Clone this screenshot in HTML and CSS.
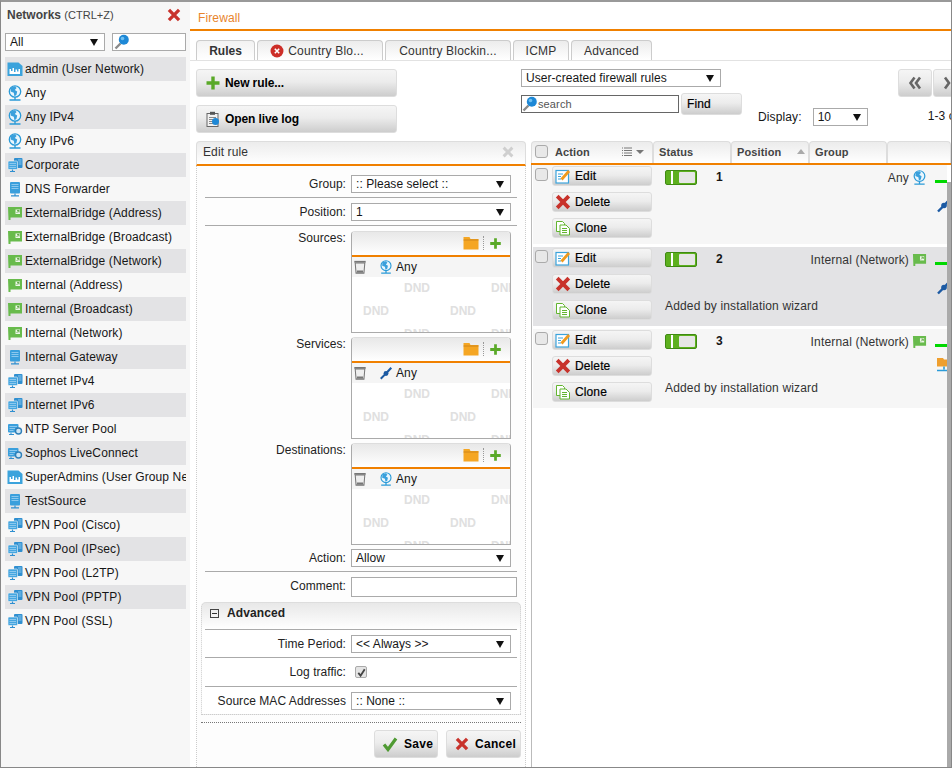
FILE: index.html
```html
<!DOCTYPE html>
<html>

<head>
    <meta charset="utf-8" />
    <title>Firewall</title>
    <link rel="stylesheet" href="styles.css">
</head>

<body>
    <!-- icon sheet -->
    <svg class="defs">
        <symbol id="i-globe" viewBox="0 0 16 16">
            <circle cx="8" cy="6.500" r="5.700" fill="#eaf6fd" stroke="#2b9bd8" stroke-width="1.300"/>
            <path d="M4 2.500l4-1.200 1.600 1.700-1.800 2 2.400 1.600-.8 3.400-2 1.200-.6-3.400L3.600 6.500z" fill="#3aa0dc"/>
            <path d="M8 12v2.500M2.500 15h11" stroke="#2b9bd8" stroke-width="1.400" fill="none"/>
        </symbol>
        <symbol id="i-user" viewBox="0 0 16 16">
            <path d="M.5 1.500h11l4 3.500v10H.5z" fill="#3ba3dc"/>
            <path d="M2.500 13V8h1.500v2h1.500V7h1.500v4h1.500V8.500h1.500v2h1.500V8h1.500v5z" fill="#fff"/>
        </symbol>
        <symbol id="i-multi" viewBox="0 0 16 16">
            <rect x="7" y="1" width="8.500" height="10" rx="1" fill="#2f8fd0"/>
            <rect x="1" y="4" width="9.500" height="8.500" rx="1" fill="#45a6e0" stroke="#f7f7f7" stroke-width=".6"/>
            <path d="M2.500 6.500h6.500M2.500 8.500h6.500M2.500 10.500h6.500M11 3h3.500M11.500 5h3M11.500 7h3" stroke="#8cc8ee" stroke-width="1"/>
            <path d="M5.500 12.500v1.500M3 14.500h5" stroke="#2f8fd0" stroke-width="1.200"/>
        </symbol>
        <symbol id="i-host" viewBox="0 0 16 16">
            <rect x="3" y="1" width="10" height="11.500" rx="1" fill="#3a9fdc"/>
            <path d="M4.500 3.500h7M4.500 5.500h7M4.500 7.500h7" stroke="#8cc8ee" stroke-width="1"/>
            <path d="M8 12.500v2M4 14.800h8" stroke="#2f8fd0" stroke-width="1.200"/>
        </symbol>
        <symbol id="i-pool" viewBox="0 0 16 16">
            <rect x="1" y="3" width="10.500" height="8.500" rx="1" fill="#3a9fdc"/>
            <path d="M2.500 5.500h7.500M2.500 7.500h5.500M2.500 9.500h4" stroke="#8cc8ee" stroke-width="1"/>
            <circle cx="11.500" cy="10" r="3" fill="#cfe6f5" stroke="#2f7fb8" stroke-width="1.400"/>
            <path d="M4 11.500v1.500M2 13.500h5" stroke="#2f8fd0" stroke-width="1"/>
        </symbol>
        <symbol id="i-iface" viewBox="0 0 16 16">
            <path d="M1 2h14v10.500H3.500V15H1.500z" fill="#68bb4c"/>
            <rect x="8.500" y="4.500" width="4.500" height="4.500" fill="#eef8e8"/>
            <path d="M9.500 8l2.500-2.500M10 5.500h2v2" stroke="#4f9a32" stroke-width=".8" fill="none"/>
        </symbol>
        <symbol id="i-find" viewBox="0 0 16 16">
            <path d="M1.500 14.500l5-5" stroke="#8a8a8a" stroke-width="2.400"/>
            <circle cx="9.800" cy="5.800" r="5" fill="#1e88d6"/>
            <circle cx="8.500" cy="4.500" r="1.800" fill="#6fc0f2"/>
        </symbol>
        <symbol id="i-plus" viewBox="0 0 16 16">
            <path d="M8 1.500v13M1.500 8h13" stroke="#5aa928" stroke-width="3.400"/>
        </symbol>
        <symbol id="i-x" viewBox="0 0 16 16">
            <path d="M2.200 2.200l11.600 11.600M13.800 2.200L2.200 13.800" stroke="#c8322b" stroke-width="3.800"/>
        </symbol>
        <symbol id="i-xgrey" viewBox="0 0 16 16">
            <path d="M3 3l10 10M13 3L3 13" stroke="#cfcfcf" stroke-width="3.400"/>
        </symbol>
        <symbol id="i-check" viewBox="0 0 16 16">
            <path d="M2 8.500l4 5L14 2.500" stroke="#4f9a32" stroke-width="3.200" fill="none"/>
        </symbol>
        <symbol id="i-log" viewBox="0 0 16 16">
            <rect x="2" y="2.500" width="11" height="13" fill="#f2f2f2" stroke="#666" stroke-width="1"/>
            <rect x="5" y=".8" width="5" height="3" fill="#555"/>
            <path d="M4 6.500h7M4 8.500h4M4 10.500h4M4 12.500h4" stroke="#888" stroke-width="1"/>
            <circle cx="10.500" cy="10.500" r="3.500" fill="#1e88d6"/>
        </symbol>
        <symbol id="i-edit" viewBox="0 0 16 16">
            <rect x="1" y="2.500" width="12.500" height="12.500" fill="#fff" stroke="#3ba3dc" stroke-width="1.200"/>
            <path d="M3 6h5M3 8.500h3M3 11h3" stroke="#3ba3dc" stroke-width="1"/>
            <path d="M6.500 11.500L14 3" stroke="#ef9a1e" stroke-width="2.800"/>
        </symbol>
        <symbol id="i-clone" viewBox="0 0 16 16">
            <path d="M1.500 1.500h6l2 2v8h-8z" fill="#fff" stroke="#63b52f"/>
            <path d="M5 5h6l3.500 3.500v6.500H5z" fill="#fff" stroke="#63b52f"/>
            <path d="M7 8.500h5M7 10.500h5M7 12.500h5" stroke="#63b52f" stroke-width="1"/>
        </symbol>
        <symbol id="i-trash" viewBox="0 0 16 16">
            <path d="M1.500 2h13" stroke="#777" stroke-width="2"/>
            <path d="M2.500 3.500l1 11.500h9l1-11.500z" fill="#eee" stroke="#777" stroke-width="1.200"/>
            <rect x="4.500" y="12" width="7" height="2.500" fill="#777"/>
        </symbol>
        <symbol id="i-folder" viewBox="0 0 16 16">
            <path d="M.5 2h6l1 2H15.500v10.500H.5z" fill="#f5a623"/>
            <path d="M.5 5h15" stroke="#c57f16" stroke-width=".8"/>
        </symbol>
        <symbol id="i-service" viewBox="0 0 16 16">
            <path d="M2 14.500l5.500-5.500M9 7.500L14 2" stroke="#1c5aa3" stroke-width="2.400"/>
            <circle cx="8" cy="8.500" r="2.800" fill="#1c5aa3"/>
        </symbol>
        <symbol id="i-fnet" viewBox="0 0 16 16">
            <path d="M1 1h6l1 1.500h7V9.500H1z" fill="#ef9f2e"/>
            <path d="M8 9.500v3M1 13.500h14" stroke="#2b9bd8" stroke-width="1.600"/>
        </symbol>
        <symbol id="i-redcircle" viewBox="0 0 16 16">
            <circle cx="8" cy="8" r="7.400" fill="#cd2e28"/>
            <path d="M5.500 5.500l5 5M10.500 5.500l-5 5" stroke="#fff" stroke-width="1.800"/>
        </symbol>
        <symbol id="i-dbl" viewBox="0 0 16 16">
            <path d="M7.500 2.500L3.500 8l4 5.500M13 2.500L9 8l4 5.500" stroke="#666" stroke-width="2.600" fill="none"/>
        </symbol>
        <symbol id="i-next" viewBox="0 0 16 16">
            <path d="M3 2.500L7 8l-4 5.500" stroke="#666" stroke-width="2.600" fill="none"/>
        </symbol>
        <symbol id="i-menu" viewBox="0 0 10 10">
            <path d="M0 1h10M0 3.500h10M0 6h10M0 8.500h10" stroke="#777" stroke-width="1" stroke-dasharray="1 1 8 0"/>
        </symbol>
        <symbol id="i-tick" viewBox="0 0 12 12">
            <path d="M2.500 6.500l2.500 3 4.500-7" stroke="#444" stroke-width="2" fill="none"/>
        </symbol>
    </svg>

    <aside class="sidebar">
        <div class="side-head">
            <div class="side-title">Networks <small>(CTRL+Z)</small></div>
            <svg class="ico-14"><use href="#i-x"/></svg>
        </div>
        <div class="side-filter">
            <div class="select w100">All</div>
            <div class="side-search"><svg class="ico-16"><use href="#i-find"/></svg></div>
        </div>
        <ul class="net-list">
            <li><svg class="ico-16"><use href="#i-user"/></svg>admin (User Network)</li>
            <li><svg class="ico-16"><use href="#i-globe"/></svg>Any</li>
            <li><svg class="ico-16"><use href="#i-globe"/></svg>Any IPv4</li>
            <li><svg class="ico-16"><use href="#i-globe"/></svg>Any IPv6</li>
            <li><svg class="ico-16"><use href="#i-multi"/></svg>Corporate</li>
            <li><svg class="ico-16"><use href="#i-host"/></svg>DNS Forwarder</li>
            <li><svg class="ico-16"><use href="#i-iface"/></svg>ExternalBridge (Address)</li>
            <li><svg class="ico-16"><use href="#i-iface"/></svg>ExternalBridge (Broadcast)</li>
            <li><svg class="ico-16"><use href="#i-iface"/></svg>ExternalBridge (Network)</li>
            <li><svg class="ico-16"><use href="#i-iface"/></svg>Internal (Address)</li>
            <li><svg class="ico-16"><use href="#i-iface"/></svg>Internal (Broadcast)</li>
            <li><svg class="ico-16"><use href="#i-iface"/></svg>Internal (Network)</li>
            <li><svg class="ico-16"><use href="#i-host"/></svg>Internal Gateway</li>
            <li><svg class="ico-16"><use href="#i-multi"/></svg>Internet IPv4</li>
            <li><svg class="ico-16"><use href="#i-multi"/></svg>Internet IPv6</li>
            <li><svg class="ico-16"><use href="#i-pool"/></svg>NTP Server Pool</li>
            <li><svg class="ico-16"><use href="#i-pool"/></svg>Sophos LiveConnect</li>
            <li><svg class="ico-16"><use href="#i-user"/></svg>SuperAdmins (User Group Network)</li>
            <li><svg class="ico-16"><use href="#i-host"/></svg>TestSource</li>
            <li><svg class="ico-16"><use href="#i-multi"/></svg>VPN Pool (Cisco)</li>
            <li><svg class="ico-16"><use href="#i-multi"/></svg>VPN Pool (IPsec)</li>
            <li><svg class="ico-16"><use href="#i-multi"/></svg>VPN Pool (L2TP)</li>
            <li><svg class="ico-16"><use href="#i-multi"/></svg>VPN Pool (PPTP)</li>
            <li><svg class="ico-16"><use href="#i-multi"/></svg>VPN Pool (SSL)</li>
        </ul>
    </aside>

    <main class="main">
        <div class="page-title">Firewall</div>

        <div class="tabs">
            <div class="tab current w59">Rules</div>
            <div class="tab tab-err w126"><svg class="ico-14"><use href="#i-redcircle"/></svg>Country Blo...</div>
            <div class="tab w126">Country Blockin...</div>
            <div class="tab w56">ICMP</div>
            <div class="tab w81">Advanced</div>
        </div>

        <div class="toolbar">
            <div class="tool-left">
                <div class="btn btn-big"><svg class="ico-16"><use href="#i-plus"/></svg>New rule...</div>
                <div class="btn btn-big"><svg class="ico-16"><use href="#i-log"/></svg>Open live log</div>
            </div>
            <div class="tool-find">
                <div class="select w200">User-created firewall rules</div>
                <div class="find-row">
                    <div class="search-box"><svg class="ico-16"><use href="#i-find"/></svg>search</div>
                    <div class="btn btn-find">Find</div>
                </div>
            </div>
            <div class="tool-display">
                <span>Display:</span>
                <div class="select w55">10</div>
            </div>
            <div class="tool-pager">
                <div class="pager">
                    <div class="btn btn-page"><svg class="ico-16"><use href="#i-dbl"/></svg></div>
                    <div class="btn btn-page"><svg class="ico-16"><use href="#i-next"/></svg></div>
                </div>
                <div class="count">1-3 of 3</div>
            </div>
        </div>

        <div class="content">
            <section class="panel">
                <div class="panel-head">
                    <span>Edit rule</span>
                    <svg class="ico-14"><use href="#i-xgrey"/></svg>
                </div>
                <div class="panel-body">
                    <div class="row line">
                        <label>Group:</label>
                        <div class="select w160">:: Please select ::</div>
                    </div>
                    <div class="row line">
                        <label>Position:</label>
                        <div class="select w160">1</div>
                    </div>
                    <div class="row stack first">
                        <label>Sources:</label>
                        <div class="box">
                            <div class="box-head">
                                <svg class="ico-16"><use href="#i-folder"/></svg>
                                <i class="box-sep"></i>
                                <svg class="ico-13"><use href="#i-plus"/></svg>
                            </div>
                            <div class="box-item">
                                <svg class="ico-14"><use href="#i-trash"/></svg>
                                <svg class="ico-14 far-left"><use href="#i-globe"/></svg>Any
                            </div>
                            <div class="dnd">
                                <div class="dnd-a"><b>DND</b><b>DND</b></div>
                                <div class="dnd-b"><b>DND</b><b>DND</b></div>
                                <div class="dnd-a"><b>DND</b><b>DND</b></div>
                            </div>
                        </div>
                    </div>
                    <div class="row stack">
                        <label>Services:</label>
                        <div class="box">
                            <div class="box-head">
                                <svg class="ico-16"><use href="#i-folder"/></svg>
                                <i class="box-sep"></i>
                                <svg class="ico-13"><use href="#i-plus"/></svg>
                            </div>
                            <div class="box-item">
                                <svg class="ico-14"><use href="#i-trash"/></svg>
                                <svg class="ico-14 far-left"><use href="#i-service"/></svg>Any
                            </div>
                            <div class="dnd">
                                <div class="dnd-a"><b>DND</b><b>DND</b></div>
                                <div class="dnd-b"><b>DND</b><b>DND</b></div>
                                <div class="dnd-a"><b>DND</b><b>DND</b></div>
                            </div>
                        </div>
                    </div>
                    <div class="row stack">
                        <label>Destinations:</label>
                        <div class="box">
                            <div class="box-head">
                                <svg class="ico-16"><use href="#i-folder"/></svg>
                                <i class="box-sep"></i>
                                <svg class="ico-13"><use href="#i-plus"/></svg>
                            </div>
                            <div class="box-item">
                                <svg class="ico-14"><use href="#i-trash"/></svg>
                                <svg class="ico-14 far-left"><use href="#i-globe"/></svg>Any
                            </div>
                            <div class="dnd">
                                <div class="dnd-a"><b>DND</b><b>DND</b></div>
                                <div class="dnd-b"><b>DND</b><b>DND</b></div>
                                <div class="dnd-a"><b>DND</b><b>DND</b></div>
                            </div>
                        </div>
                    </div>
                    <div class="row line tight">
                        <label>Action:</label>
                        <div class="select w160">Allow</div>
                    </div>
                    <div class="row comment-row">
                        <label>Comment:</label>
                        <div class="text-input"></div>
                    </div>
                    <div class="adv">
                        <div class="adv-title"><i class="minus"></i>Advanced</div>
                        <div class="row line">
                            <label>Time Period:</label>
                            <div class="select w160">&lt;&lt; Always &gt;&gt;</div>
                        </div>
                        <div class="row line log-row">
                            <label>Log traffic:</label>
                            <div class="tickbox"><svg class="ico-11"><use href="#i-tick"/></svg></div>
                        </div>
                        <div class="row">
                            <label>Source MAC Addresses</label>
                            <div class="select w160">:: None ::</div>
                        </div>
                    </div>
                    <div class="form-foot">
                        <div class="btn btn-save"><svg class="ico-16"><use href="#i-check"/></svg>Save</div>
                        <div class="btn btn-cancel"><svg class="ico-14"><use href="#i-x"/></svg>Cancel</div>
                    </div>
                </div>
            </section>

            <section class="grid">
                <div class="grid-head">
                    <div class="th th-action">
                        <i class="chk"></i>
                        <span>Action</span>
                        <svg class="ico-10 push"><use href="#i-menu"/></svg>
                        <i class="arrow-down"></i>
                    </div>
                    <div class="th">Status</div>
                    <div class="th"><span>Position</span><i class="arrow-up push"></i></div>
                    <div class="th">Group</div>
                    <div class="th th-last"></div>
                </div>
                <div class="grid-body">
                    <div class="rules">
                        <div class="rule">
                            <i class="chk rule-chk"></i>
                            <div class="rule-btns">
                                <div class="btn btn-row"><svg class="ico-16"><use href="#i-edit"/></svg>Edit</div>
                                <div class="btn btn-row"><svg class="ico-16"><use href="#i-x"/></svg>Delete</div>
                                <div class="btn btn-row"><svg class="ico-16"><use href="#i-clone"/></svg>Clone</div>
                            </div>
                            <div class="toggle"><i></i></div>
                            <div class="num">1</div>
                            <div class="dest">Any<svg class="ico-15"><use href="#i-globe"/></svg></div>
                            <div class="far"><i class="bar"></i><svg class="ico-16 far-ico"><use href="#i-service"/></svg></div>
                        </div>
                        <div class="rule shade">
                            <i class="chk rule-chk"></i>
                            <div class="rule-btns">
                                <div class="btn btn-row"><svg class="ico-16"><use href="#i-edit"/></svg>Edit</div>
                                <div class="btn btn-row"><svg class="ico-16"><use href="#i-x"/></svg>Delete</div>
                                <div class="btn btn-row"><svg class="ico-16"><use href="#i-clone"/></svg>Clone</div>
                            </div>
                            <div class="toggle"><i></i></div>
                            <div class="num">2</div>
                            <div class="dest">Internal (Network)<svg class="ico-15"><use href="#i-iface"/></svg></div>
                            <div class="far"><i class="bar"></i><svg class="ico-16 far-ico"><use href="#i-service"/></svg></div>
                            <div class="note">Added by installation wizard</div>
                        </div>
                        <div class="rule">
                            <i class="chk rule-chk"></i>
                            <div class="rule-btns">
                                <div class="btn btn-row"><svg class="ico-16"><use href="#i-edit"/></svg>Edit</div>
                                <div class="btn btn-row"><svg class="ico-16"><use href="#i-x"/></svg>Delete</div>
                                <div class="btn btn-row"><svg class="ico-16"><use href="#i-clone"/></svg>Clone</div>
                            </div>
                            <div class="toggle"><i></i></div>
                            <div class="num">3</div>
                            <div class="dest">Internal (Network)<svg class="ico-15"><use href="#i-iface"/></svg></div>
                            <div class="far"><i class="bar"></i><svg class="ico-16 far-ico fnet"><use href="#i-fnet"/></svg></div>
                            <div class="note">Added by installation wizard</div>
                        </div>
                    </div>
                    <div class="scroll"><i></i></div>
                </div>
            </section>
        </div>
    </main>
</body>

</html>
```

FILE: styles.css
```css
* {
    margin: 0;
    padding: 0;
    box-sizing: border-box;
}

html,
body {
    height: 768px;
    overflow: hidden;
}

body {
    width: 952px;
    display: flex;
    font-family: "Liberation Sans", Arial, sans-serif;
    font-size: 12px;
    letter-spacing: .12px;
    color: #161616;
    background: #fff;
    border-top: 2px solid #999;
    border-left: 1px solid #888;
    border-right: 1px solid #888;
    border-bottom: 1px solid #888;
}

li {
    list-style: none;
}

i {
    display: block;
}

svg {
    display: block;
    flex-shrink: 0;
}

.defs {
    display: none;
}

.ico-10 { width: 10px; height: 10px; }
.ico-11 { width: 11px; height: 11px; }
.ico-13 { width: 13px; height: 13px; }
.ico-14 { width: 14px; height: 14px; }
.ico-15 { width: 15px; height: 15px; }
.ico-16 { width: 16px; height: 16px; }

.w55 { width: 55px; }
.w100 { width: 100px; }
.w160 { width: 160px; }
.w200 { width: 200px; }
.w59 { width: 59px; }
.w56 { width: 56px; }
.w81 { width: 81px; }
.w126 { width: 126px; }

/* select look-alike */
.select {
    display: flex;
    align-items: center;
    justify-content: space-between;
    flex-shrink: 0;
    height: 18px;
    padding: 0 6px 0 4px;
    letter-spacing: .05px;
    background: #fff;
    border: 1px solid #aaa;
    white-space: nowrap;
}

.select::after {
    content: "";
    border-left: 4px solid transparent;
    border-right: 4px solid transparent;
    border-top: 7px solid #111;
}

/* buttons */
.btn {
    display: flex;
    align-items: center;
    flex-shrink: 0;
    color: #000;
    border: 1px solid #ddd;
    border-radius: 3px;
    background: linear-gradient(#f5f5f5, #ececec 45%, #cdcdcd);
    white-space: nowrap;
}

.btn-big {
    width: 201px;
    height: 28px;
    padding-left: 8px;
    gap: 4px;
    font-weight: bold;
    letter-spacing: -.1px;
}

.btn-find {
    width: 61px;
    height: 22px;
    padding-left: 5px;
    -webkit-text-stroke: .2px #000;
}

.btn-page {
    width: 34px;
    height: 28px;
    justify-content: center;
}

.btn-row {
    width: 100px;
    height: 20px;
    padding-left: 2px;
    gap: 4px;
    -webkit-text-stroke: .2px #000;
}

.btn-save,
.btn-cancel {
    height: 28px;
    font-weight: bold;
    letter-spacing: .3px;
    gap: 6px;
}

.btn-save {
    width: 64px;
    padding-left: 7px;
}

.btn-cancel {
    width: 75px;
    padding-left: 8px;
}

/* left list */
.sidebar {
    width: 189px;
    flex-shrink: 0;
    background: #f7f7f7;
}

.side-head {
    display: flex;
    justify-content: space-between;
    height: 31px;
    padding: 6px 9px 0 6px;
}

.side-title {
    font-weight: bold;
    line-height: 14px;
    color: #444;
    letter-spacing: 0;
}

.side-title small {
    font-size: 11px;
    font-weight: normal;
}

.side-filter {
    display: flex;
    gap: 7px;
    padding: 0 4px;
    margin-bottom: 6px;
}

.side-search {
    width: 74px;
    height: 18px;
    padding-left: 1px;
    background: #fff;
    border: 1px solid #aaa;
}

.net-list {
    padding: 0 4px;
}

.net-list li {
    display: flex;
    align-items: center;
    gap: 2px;
    height: 24px;
    padding-left: 2px;
    overflow: hidden;
    white-space: nowrap;
}

.net-list li:nth-child(odd) {
    background: #e3e3e5;
}

/* main */
.main {
    width: 761px;
    overflow: hidden;
}

.page-title {
    height: 29px;
    padding: 9px 0 0 8px;
    line-height: 14px;
    color: #e8842c;
    border-bottom: 2px solid #f08000;
}

.tabs {
    display: flex;
    gap: 2px;
    margin-top: 9px;
    padding-left: 6px;
    height: 21px;
    border-bottom: 1px solid #e2e2e2;
}

.tab {
    display: flex;
    align-items: center;
    justify-content: center;
    gap: 4px;
    height: 20px;
    letter-spacing: .2px;
    border: 1px solid #ccc;
    border-bottom: none;
    border-radius: 4px 4px 0 0;
    background: linear-gradient(#ececec, #fff);
    white-space: nowrap;
    color: #333;
}

.tab.current {
    font-weight: bold;
    letter-spacing: 0;
    background: linear-gradient(#f2f2f2, #fff);
}

.tab-err {
    padding-right: 6px;
}

.toolbar {
    display: flex;
    padding: 8px 0 8px 6px;
}

.tool-left {
    display: flex;
    flex-direction: column;
    gap: 8px;
    margin-right: 124px;
}

.tool-find {
    flex-shrink: 0;
}

.find-row {
    display: flex;
    align-items: center;
    gap: 2px;
    margin-top: 6px;
}

.search-box {
    display: flex;
    align-items: center;
    width: 158px;
    height: 18px;
    font-size: 11px;
    color: #555;
    background: #fff;
    border: 1px solid #666;
}

.tool-display {
    display: flex;
    align-items: center;
    align-self: flex-start;
    flex-shrink: 0;
    gap: 11px;
    margin: 39px 0 0 16px;
}

.tool-pager {
    flex-shrink: 0;
    margin-left: 30px;
}

.pager {
    display: flex;
    gap: 1px;
}

.count {
    margin: 13px 0 0 30px;
    line-height: 12px;
    white-space: nowrap;
}

.content {
    display: flex;
    gap: 5px;
    padding-left: 6px;
    height: 626px;
}

/* edit form */
.panel {
    display: flex;
    flex-direction: column;
    width: 330px;
    flex-shrink: 0;
}

.panel-head {
    display: flex;
    align-items: center;
    justify-content: space-between;
    height: 25px;
    padding: 0 10px 2px 6px;
    color: #333;
    border: 1px solid #ddd;
    border-bottom: 2px solid #f08000;
    border-radius: 4px 4px 0 0;
    background: linear-gradient(#ececec, #fff);
}

.panel-body {
    flex: 1;
    padding: 4px 8px 0;
    background: #fdfdfd;
    border-left: 1px dotted #ccc;
    border-right: 1px dotted #ccc;
}

.row {
    display: flex;
    gap: 5px;
    padding: 5px 0 4px;
}

.row label {
    width: 141px;
    flex-shrink: 0;
    text-align: right;
    line-height: 18px;
    letter-spacing: .05px;
    color: #222;
    white-space: nowrap;
}

.line {
    border-bottom: 1px solid #aaa;
}

.stack {
    padding: 4px 0 0;
}

.stack.first {
    padding-top: 5px;
}

.stack label {
    line-height: 14px;
}

.tight {
    padding-top: 4px;
}

.box {
    width: 160px;
    height: 102px;
    overflow: hidden;
    background: #fff;
    border: 1px solid #aaa;
    border-top-color: #ddd;
    border-radius: 4px 4px 0 0;
}

.box-head {
    display: flex;
    align-items: center;
    justify-content: flex-end;
    gap: 4px;
    height: 25px;
    padding: 0 8px 1px 0;
    border-bottom: 2px solid #f08000;
    background: linear-gradient(#e8e8e8, #fff);
}

.box-sep {
    height: 14px;
    margin-right: 1px;
    border-left: 1px dotted #999;
}

.box-item {
    display: flex;
    align-items: center;
    height: 20px;
    padding-left: 1px;
    background: #f5f5f5;
}

.far-left {
    margin: 0 3px 0 12px;
}

.dnd {
    font-size: 12px;
    line-height: 23px;
    color: #e0e0e0;
    letter-spacing: 0;
    white-space: nowrap;
}

.dnd-a,
.dnd-b {
    display: flex;
    gap: 61px;
    height: 23px;
}

.dnd-a {
    padding-left: 52px;
}

.dnd-b {
    padding-left: 11px;
}

.comment-row {
    padding: 5px 0 0;
}

.text-input {
    width: 166px;
    height: 20px;
    background: #fff;
    border: 1px solid #aaa;
}

.adv {
    margin: 5px -4px 0;
    padding: 0 3px;
    border: 1px dotted #ccc;
    border-top: 1px solid #ddd;
    border-radius: 5px 5px 0 0;
    background: linear-gradient(#e8e8e8, #fff 26px);
    background-color: #fdfdfd;
}

.adv-title {
    display: flex;
    align-items: center;
    gap: 8px;
    height: 27px;
    padding: 0 0 6px 5px;
    font-weight: bold;
    color: #222;
    border-bottom: 1px solid #aaa;
}

.minus {
    width: 9px;
    height: 9px;
    background: linear-gradient(#333, #333) center / 5px 1px no-repeat;
    border: 1px solid #444;
}

.log-row {
    padding: 5px 0;
}

.tickbox {
    display: flex;
    align-items: center;
    justify-content: center;
    width: 12px;
    height: 12px;
    margin: 3px 0 0 4px;
    background: #e4e4e4;
    border: 1px solid #aaa;
    border-radius: 2px;
}

.form-foot {
    display: flex;
    justify-content: flex-end;
    gap: 8px;
    margin: 7px -4px 0;
    padding-top: 7px;
    border-top: 1px dotted #777;
}

/* rules grid */
.grid {
    flex: 1;
    min-width: 0;
}

.grid-head {
    display: flex;
    height: 24px;
    border-bottom: 2px solid #f08000;
}

.th {
    display: flex;
    align-items: center;
    width: 78px;
    height: 22px;
    padding: 0 3px 2px 5px;
    font-size: 11px;
    font-weight: bold;
    color: #444;
    border: 1px solid #ddd;
    border-bottom: none;
    border-radius: 4px 4px 0 0;
    background: linear-gradient(#ececec, #fff);
}

.th-action {
    width: 122px;
    padding: 0 8px 2px 3px;
}

.th-action span {
    margin-left: 7px;
}

.th-last {
    flex: 1;
}

.push {
    margin-left: auto;
}

.chk {
    width: 13px;
    height: 13px;
    flex-shrink: 0;
    background: #e8e8e8;
    border: 1px solid #aaa;
    border-radius: 3px;
}

.arrow-down {
    margin-left: 4px;
    border-left: 4px solid transparent;
    border-right: 4px solid transparent;
    border-top: 4px solid #777;
}

.arrow-up {
    border-left: 4px solid transparent;
    border-right: 4px solid transparent;
    border-bottom: 5px solid #aaa;
}

.grid-body {
    display: flex;
    height: 602px;
    padding-left: 1px;
    overflow: hidden;
    border-left: 1px solid #bbb;
}

.rules {
    width: 414px;
    overflow: hidden;
}

.rule {
    display: grid;
    grid-template-columns: 19px 100px 13px 51px 60px 1fr 19px;
    grid-template-rows: 26px 26px 26px;
    height: 79px;
    margin-bottom: 3px;
    padding-top: 1px;
    overflow: hidden;
    background: #f6f6f6;
}

.rule.shade {
    background: #e3e3e5;
}

.rule-chk {
    grid-column: 1;
    grid-row: 1;
    margin: 2px 0 0 2px;
}

.rule-btns {
    grid-column: 2;
    grid-row: 1 / 4;
    display: flex;
    flex-direction: column;
    gap: 6px;
}

.toggle {
    grid-column: 4;
    grid-row: 1;
    display: flex;
    justify-content: flex-end;
    width: 32px;
    height: 15px;
    margin-top: 4px;
    padding: 1px;
    background: linear-gradient(90deg, #5db01e 5px, #fff 5px, #fff 7px, #5db01e 7px);
    border: 1px solid #3f8a12;
    border-radius: 2px;
}

.toggle i {
    width: 16px;
    background: #e6e6e6;
    border-radius: 1px;
}

.num {
    grid-column: 5;
    grid-row: 1;
    font-weight: bold;
    line-height: 22px;
}

.dest {
    grid-column: 6;
    grid-row: 1;
    display: flex;
    justify-content: flex-end;
    gap: 3px;
    padding-right: 1px;
    line-height: 24px;
    letter-spacing: .17px;
    color: #333;
    white-space: nowrap;
}

.dest svg {
    margin-top: 4px;
}

.far {
    grid-column: 7;
    grid-row: 1 / 4;
    overflow: hidden;
}

.bar {
    width: 12px;
    height: 3px;
    margin: 14px 0 0 7px;
    background: #00d800;
}

.far-ico {
    margin: 14px 0 0 8px;
}

.far-ico.fnet {
    margin-top: 10px;
}

.note {
    grid-column: 4 / 7;
    grid-row: 3;
    line-height: 12px;
    letter-spacing: .15px;
    color: #333;
    white-space: nowrap;
}

.scroll {
    width: 4px;
    flex-shrink: 0;
    padding-top: 17px;
}

.scroll i {
    height: 100%;
    background: #aaa;
}
```
